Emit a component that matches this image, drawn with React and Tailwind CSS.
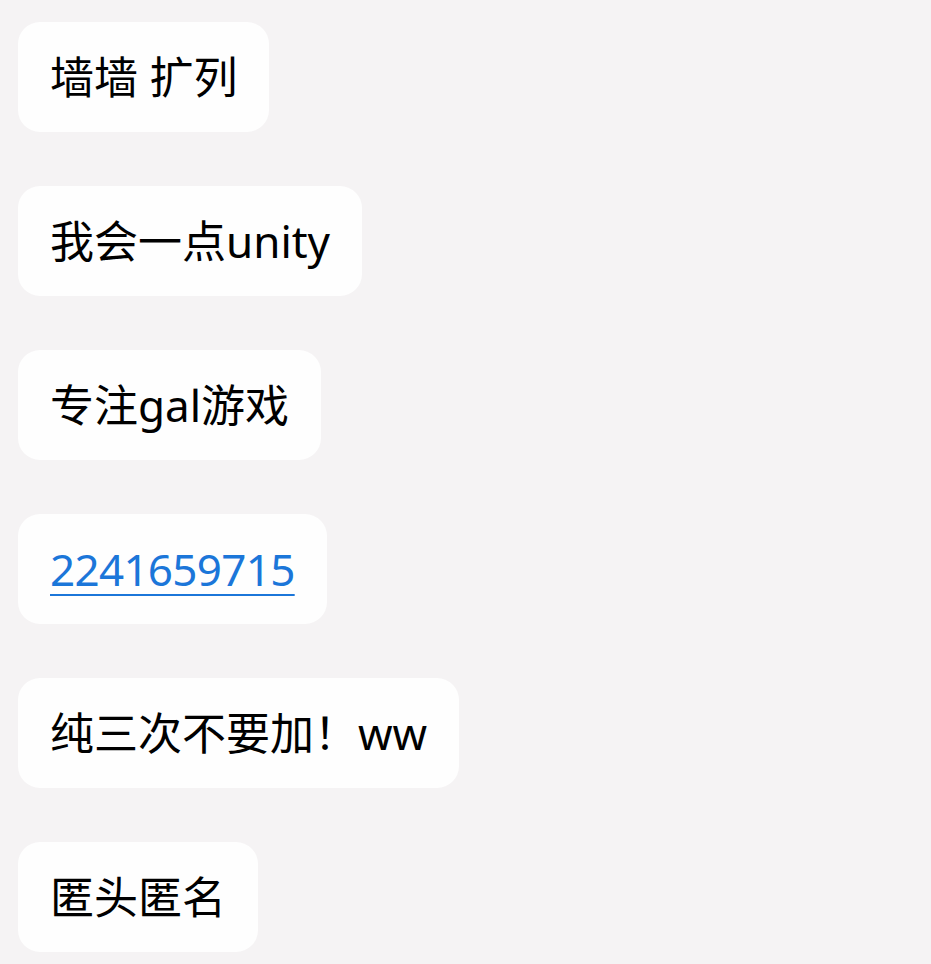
const messages = [
  { text: '墙墙 扩列' },
  { text: '我会一点unity' },
  { text: '专注gal游戏' },
  { text: '2241659715', link: true },
  { text: '纯三次不要加！ww' },
  { text: '匿头匿名' },
]

export default function App() {
  return (
    <div
      className="min-h-screen bg-[#f5f3f4] pl-[18px] pt-[22px] pb-4 flex flex-col items-start gap-[54px]"
      style={{ fontFamily: '"Noto Sans", "Noto Sans CJK SC", sans-serif' }}
    >
      {messages.map((m, i) => (
        <div
          key={i}
          className="bg-[#fefefe] rounded-[22px] px-8 py-[22px] text-[44px] leading-[66px] text-black whitespace-pre"
        >
          {m.link ? (
            <a
              href="#"
              className="text-[#1b76d9] tracking-[-0.7px] underline decoration-2 underline-offset-[8px]"
            >
              {m.text}
            </a>
          ) : (
            m.text
          )}
        </div>
      ))}
    </div>
  )
}
